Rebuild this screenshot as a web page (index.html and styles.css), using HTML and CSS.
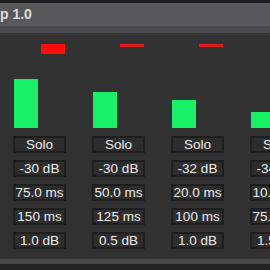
FILE: index.html
```html
<!DOCTYPE html>
<html lang="en">
<head>
    <meta charset="UTF-8">
    <meta name="viewport" content="width=device-width, initial-scale=1.0">
    <title>Comp 1.0</title>
    <link rel="stylesheet" href="styles.css">
</head>
<body>
    <div class="topline"></div>
    <div class="titlebar">p 1.0</div>
    <div class="subbar"></div>

    <div class="bands">
        <div class="band">
            <div class="meters">
                <div class="level" style="height: 49px;"></div>
                <div class="reduction" style="height: 10px;"></div>
            </div>
            <div class="field">Solo</div>
            <div class="field">-30 dB</div>
            <div class="field">75.0 ms</div>
            <div class="field">150 ms</div>
            <div class="field">1.0 dB</div>
        </div>
        <div class="band">
            <div class="meters">
                <div class="level" style="height: 36px;"></div>
                <div class="reduction thin" style="height: 3px;"></div>
            </div>
            <div class="field">Solo</div>
            <div class="field">-30 dB</div>
            <div class="field">50.0 ms</div>
            <div class="field">125 ms</div>
            <div class="field">0.5 dB</div>
        </div>
        <div class="band">
            <div class="meters">
                <div class="level" style="height: 28px;"></div>
                <div class="reduction thin" style="height: 3px;"></div>
            </div>
            <div class="field">Solo</div>
            <div class="field">-32 dB</div>
            <div class="field">20.0 ms</div>
            <div class="field">100 ms</div>
            <div class="field">1.0 dB</div>
        </div>
        <div class="band">
            <div class="meters">
                <div class="level" style="height: 16px;"></div>
                <div class="reduction thin" style="height: 3px;"></div>
            </div>
            <div class="field">Solo</div>
            <div class="field">-34 dB</div>
            <div class="field">10.0 ms</div>
            <div class="field">75.0 ms</div>
            <div class="field">1.5 dB</div>
        </div>
    </div>

    <div class="footer">
        <div class="footer-light"></div>
        <div class="footer-dark"></div>
    </div>
</body>
</html>
```

FILE: styles.css
```css
html, body {
    margin: 0;
    padding: 0;
    width: 270px;
    height: 270px;
    overflow: hidden;
}

body {
    background-color: #323232;
    color: #ececec;
    font-family: "Liberation Sans", Arial, sans-serif;
    display: flex;
    flex-direction: column;
}

.topline {
    height: 3px;
    background-color: #1e1e1e;
}

.titlebar {
    height: 23px;
    line-height: 23px;
    background-color: #58585b;
    color: #dcdcdc;
    font-size: 14px;
    font-weight: bold;
    white-space: nowrap;
}

.subbar {
    height: 7px;
    background-color: #4a4a4d;
}

.bands {
    display: flex;
    gap: 26px;
    padding-left: 13px;
    flex: 1;
}

.band {
    width: 53px;
    flex-shrink: 0;
    display: flex;
    flex-direction: column;
    gap: 7px;
}

.meters {
    height: 84px;
    margin-top: 11px;
    margin-bottom: 1px;
    display: flex;
    gap: 3px;
    padding-left: 1px;
}

.level {
    width: 24px;
    align-self: flex-end;
    background-color: #18f066;
}

.reduction {
    width: 24px;
    align-self: flex-start;
    background-color: #ff0c0c;
}

.reduction.thin {
    background-color: #e01818;
}

.field {
    height: 13px;
    line-height: 13px;
    border: 2px solid #1e1e1e;
    background-color: #2d2d2d;
    font-size: 13.5px;
    text-align: center;
    white-space: nowrap;
    overflow: hidden;
}

.footer {
    height: 22px;
    display: flex;
    flex-direction: column;
    justify-content: flex-end;
}

.footer-light {
    height: 5px;
    background-color: #484848;
}

.footer-dark {
    height: 6px;
    background-color: #242424;
}
```
